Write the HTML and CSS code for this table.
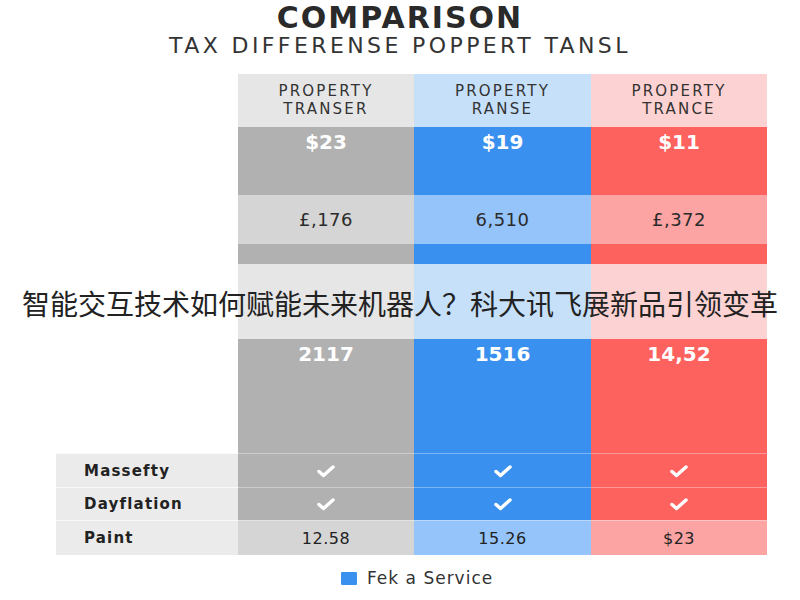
FILE: index.html
```html
<!DOCTYPE html>
<html lang="en">
<head>
<meta charset="utf-8">
<title>Comparison</title>
<link rel="stylesheet" href="styles.css">
</head>
<body>
<div class="page">
  <header class="head">
    <h1 class="title">COMPARISON</h1>
    <p class="subtitle">TAX DIFFERENSE POPPERT TANSL</p>
  </header>

  <div class="table">
    <div class="cell blank r-head"></div>
    <div class="cell gray-l r-head hd">PROPERTY<br>TRANSER</div>
    <div class="cell blue-l r-head hd">PROPERTY<br>RANSE</div>
    <div class="cell red-l r-head hd">PROPERTY<br>TRANCE</div>

    <div class="cell blank r-big"></div>
    <div class="cell gray-d r-big big">$23</div>
    <div class="cell blue-d r-big big">$19</div>
    <div class="cell red-d r-big big">$11</div>

    <div class="cell blank r-mid"></div>
    <div class="cell gray-m r-mid num">£,176</div>
    <div class="cell blue-m r-mid num">6,510</div>
    <div class="cell red-m r-mid num">£,372</div>

    <div class="cell blank r-thin"></div>
    <div class="cell gray-d r-thin"></div>
    <div class="cell blue-d r-thin"></div>
    <div class="cell red-d r-thin"></div>

    <div class="cell blank r-light"></div>
    <div class="cell gray-l r-light"></div>
    <div class="cell blue-l r-light"></div>
    <div class="cell red-l r-light"></div>

    <div class="cell blank r-tall"></div>
    <div class="cell gray-d r-tall big">2117</div>
    <div class="cell blue-d r-tall big">1516</div>
    <div class="cell red-d r-tall big">14,52</div>

    <div class="cell label r-row line">Massefty</div>
    <div class="cell gray-d r-row line chk"><svg viewBox="0 0 18 14" class="tick"><polyline points="2,7.5 6.5,11.5 16,3"/></svg></div>
    <div class="cell blue-d r-row line chk"><svg viewBox="0 0 18 14" class="tick"><polyline points="2,7.5 6.5,11.5 16,3"/></svg></div>
    <div class="cell red-d r-row line chk"><svg viewBox="0 0 18 14" class="tick"><polyline points="2,7.5 6.5,11.5 16,3"/></svg></div>

    <div class="cell label r-row line">Dayflation</div>
    <div class="cell gray-d r-row line chk"><svg viewBox="0 0 18 14" class="tick"><polyline points="2,7.5 6.5,11.5 16,3"/></svg></div>
    <div class="cell blue-d r-row line chk"><svg viewBox="0 0 18 14" class="tick"><polyline points="2,7.5 6.5,11.5 16,3"/></svg></div>
    <div class="cell red-d r-row line chk"><svg viewBox="0 0 18 14" class="tick"><polyline points="2,7.5 6.5,11.5 16,3"/></svg></div>

    <div class="cell label r-row line">Paint</div>
    <div class="cell gray-m r-row line val">12.58</div>
    <div class="cell blue-m r-row line val">15.26</div>
    <div class="cell red-m r-row line val">$23</div>
  </div>

  <div class="legend">
    <span class="swatch"></span>
    <span class="legend-text">Fek a Service</span>
  </div>

  <p class="overlay">智能交互技术如何赋能未来机器人？科大讯飞展新品引领变革</p>
</div>
</body>
</html>
```

FILE: styles.css
```css
* { box-sizing: border-box; }
html, body { margin: 0; padding: 0; background: #ffffff; }
body { font-family: "DejaVu Sans", "Liberation Sans", sans-serif; color: #2b2b2b; }

.page { position: relative; width: 800px; height: 600px; overflow: hidden; }

.head { text-align: center; padding-top: 1px; height: 74px; }
.title {
  margin: 0;
  font-size: 30px;
  line-height: 33px;
  font-weight: 700;
  letter-spacing: 2px;
  color: #2a2a2a;
}
.subtitle {
  margin: 0;
  font-size: 22px;
  line-height: 24px;
  font-weight: 400;
  letter-spacing: 3.4px;
  color: #333;
}

.table {
  display: grid;
  margin-left: 56px;
  width: 711px;
  grid-template-columns: 182px 176px 177px 176px;
  grid-template-rows: 53px 68px 49px 20px 75px 114px 34px 33px 35px;
}
.cell { display: flex; align-items: center; justify-content: center; }
.blank { background: #fff; }

.gray-l { background: #e6e6e6; }
.gray-d { background: #b1b1b1; }
.gray-m { background: #d5d5d5; }
.blue-l { background: #c6e0fa; }
.blue-d { background: #3a90ee; }
.blue-m { background: #95c4fa; }
.red-l { background: #fdd2d2; }
.red-d { background: #fd625e; }
.red-m { background: #fca4a4; }

.hd {
  flex-direction: column;
  text-align: center;
  font-size: 15px;
  line-height: 18px;
  letter-spacing: 2.2px;
  color: #333;
  padding-bottom: 2px;
}
.big {
  align-items: flex-start;
  padding-top: 4px;
  font-size: 20px;
  line-height: 22px;
  font-weight: 700;
  color: #fff;
}
.num {
  font-size: 18px;
  line-height: 22px;
  color: #2b2b2b;
  letter-spacing: 0.5px;
}
.label {
  justify-content: flex-start;
  padding-left: 28px;
  background: #ebebeb;
  font-size: 15px;
  font-weight: 700;
  letter-spacing: 1.2px;
  color: #222;
}
.line { border-top: 1px solid rgba(255,255,255,0.35); }
.label.line { border-top: 1px solid #fafafa; }
.val { font-size: 16px; letter-spacing: 0.5px; color: #222; }
.tick { width: 18px; height: 14px; }
.tick polyline { fill: none; stroke: #fff; stroke-width: 3.4; stroke-linecap: round; stroke-linejoin: round; }

.legend {
  display: flex;
  align-items: center;
  gap: 10px;
  padding-left: 341px;
  margin-top: 13px;
}
.swatch { width: 16px; height: 13px; background: #3a90ee; border-radius: 1px; }
.legend-text { font-size: 17px; letter-spacing: 1px; color: #333; }

.overlay {
  position: absolute;
  left: 0;
  right: 0;
  top: 284px;
  margin: 0;
  text-align: center;
  font-family: "Noto Sans CJK SC", sans-serif;
  font-size: 28px;
  line-height: 38px;
  color: #222;
}
```
